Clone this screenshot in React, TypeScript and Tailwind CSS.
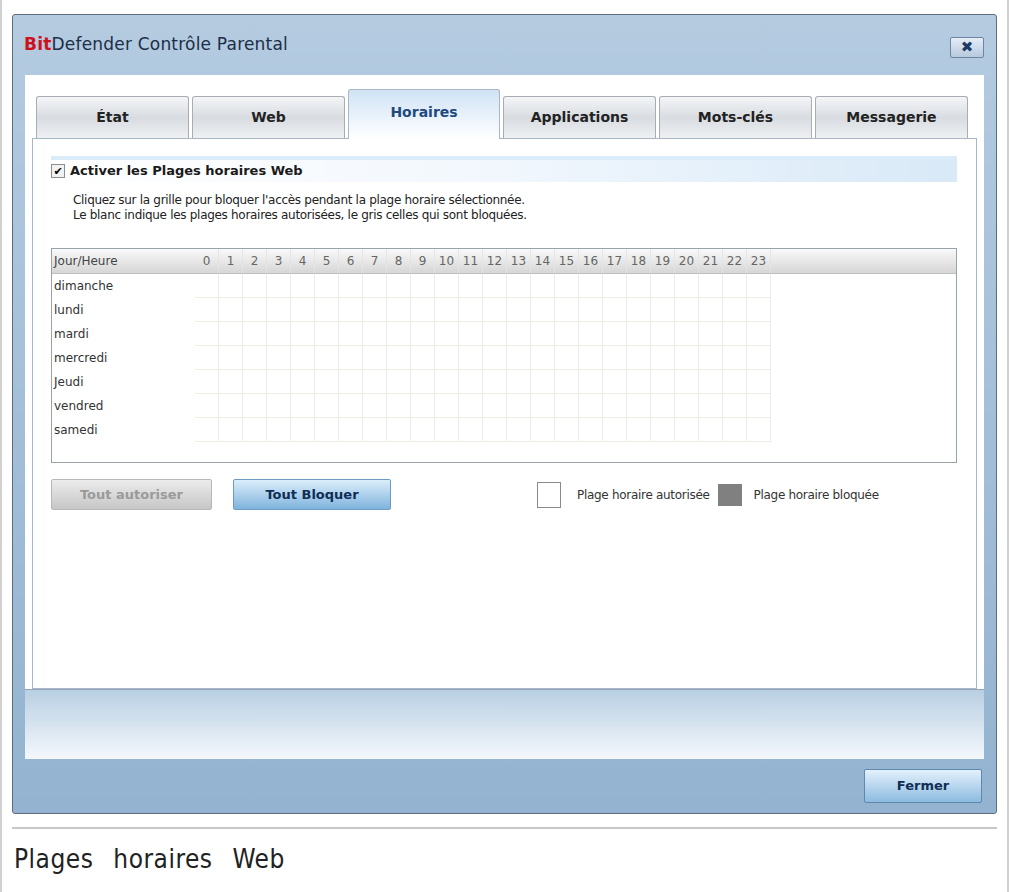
import React from "react";

const tabs = ["État", "Web", "Horaires", "Applications", "Mots-clés", "Messagerie"];
const days = ["dimanche", "lundi", "mardi", "mercredi", "Jeudi", "vendred", "samedi"];
const hours = Array.from({ length: 24 }, (_, i) => i);

export default function App() {
  return (
    <div className="w-[1009px] h-[892px] bg-white border-l-2 border-r-2 border-[#d0d0d0] pt-[14px] px-[10px]" style={{ fontFamily: "Tahoma, 'DejaVu Sans', sans-serif" }}>
      <div className="h-[800px] flex flex-col border border-[#5d6b7a] rounded-[3px] bg-gradient-to-b from-[#b4cbe0] to-[#93b3d0]">
        <div className="h-[60px] flex items-center justify-between pl-[11px] pr-[12px]">
          <div className="text-[17px] text-[#1c2e48] tracking-[0.2px]" style={{ fontFamily: "'DejaVu Sans', sans-serif" }}>
            <span className="text-[#d0101a] font-bold">Bit</span>Defender Contrôle Parental
          </div>
          <div className="w-[34px] h-[21px] border border-[#6d86a3] rounded-[2px] bg-gradient-to-b from-[#e6eef7] to-[#b6c9de] flex items-center justify-center text-[#203a66] font-bold text-[15px] mt-[4px]">✖</div>
        </div>
        <div className="mx-[12px] bg-white flex flex-col h-[614px] pt-[13px] px-[7px]">
          <div className="flex items-end gap-[3px] pl-[4px] pr-[9px] h-[50px]">
            {tabs.map((t) => {
              const active = t === "Horaires";
              return (
                <div
                  key={t}
                  className={
                    active
                      ? "w-[152px] h-[50px] border border-b-0 border-[#a9b6c5] rounded-t-[3px] bg-gradient-to-b from-[#cfe3f4] to-white text-[#1e4a80] text-[14px] font-bold flex items-start justify-center pt-[12px] relative top-[1px]"
                      : "w-[153px] h-[42px] border border-b-0 border-[#a7adb5] rounded-t-[3px] bg-gradient-to-b from-[#f4f5f7] via-[#d8dce1] to-[#eef0f2] text-[#222] text-[14px] font-bold flex items-center justify-center"
                  }
                >
                  {t}
                </div>
              );
            })}
          </div>
          <div className="flex-1 border border-[#a9b6c5] bg-white pl-[18px] pr-[19px] pt-[17px]">
            <div className="h-[26px] flex items-center gap-[5px] bg-gradient-to-r from-white via-[#f1f7fd] to-[#d8e9f7] border-t-4 border-t-[#dcebf8]">
              <div className="w-[14px] h-[14px] border border-[#8a8f96] bg-[#f2f2f2] flex items-center justify-center text-[11px] text-black leading-none">✔</div>
              <span className="text-[13px] font-bold text-[#1a1a1a]">Activer les Plages horaires Web</span>
            </div>
            <div className="mt-[11px] pl-[22px] text-[12px] leading-[15px] text-[#222] tracking-[-0.3px]">
              <div>Cliquez sur la grille pour bloquer l'accès pendant la plage horaire sélectionnée.</div>
              <div>Le blanc indique les plages horaires autorisées, le gris celles qui sont bloquées.</div>
            </div>
            <div className="mt-[25px] h-[215px] border border-[#9aa2aa] bg-white">
              <div className="flex h-[25px] bg-gradient-to-b from-[#fafafa] to-[#d6d6d6] border-b border-[#c0c0c0] text-[12px] text-[#444]">
                <div className="w-[143px] pl-[2px] flex items-center">Jour/Heure</div>
                {hours.map((h) => (
                  <div key={h} className="w-[24px] flex items-center justify-center border-r border-[#e4e4e4] text-[#666]">{h}</div>
                ))}
              </div>
              {days.map((d) => (
                <div key={d} className="flex h-[24px] text-[12px] text-[#333]">
                  <div className="w-[143px] pl-[2px] flex items-center">{d}</div>
                  {hours.map((h) => (
                    <div key={h} className="w-[24px] border-r border-b border-[#eceee4]" />
                  ))}
                </div>
              ))}
            </div>
            <div className="mt-[16px] flex items-center">
              <div className="w-[161px] h-[31px] border border-[#b8b8b8] rounded-[2px] bg-gradient-to-b from-[#ececec] to-[#c6c6c6] flex items-center justify-center text-[13px] font-bold text-[#9a9a9a]">Tout autoriser</div>
              <div className="ml-[21px] w-[158px] h-[31px] border border-[#6e9cc4] rounded-[2px] bg-gradient-to-b from-[#dceefb] to-[#7fb3dc] flex items-center justify-center text-[13px] font-bold text-[#0f2d55]">Tout Bloquer</div>
              <div className="ml-[146px] w-[24px] h-[26px] border border-[#8a8a8a] bg-white" />
              <span className="ml-[16px] text-[12px] text-[#333] tracking-[-0.3px]">Plage horaire autorisée</span>
              <div className="ml-[8px] w-[24px] h-[22px] bg-[#808080]" />
              <span className="ml-[12px] text-[12px] text-[#333] tracking-[-0.3px]">Plage horaire bloquée</span>
            </div>
          </div>
        </div>
        <div className="mx-[12px] h-[70px] bg-gradient-to-b from-[#b9cfe3] to-[#f4f8fc] border-t border-[#8fa5bb]" />
        <div className="flex-1 flex items-center justify-end pr-[14px]">
          <div className="w-[118px] h-[34px] border border-[#5f88b0] rounded-[2px] bg-gradient-to-b from-[#e3f1fb] to-[#8dbbe0] flex items-center justify-center text-[13px] font-bold text-[#0f2d55]">Fermer</div>
        </div>
      </div>
      <div className="mt-[13px] border-t-2 border-[#c8c8c8]" />
      <div className="mt-[11px] pl-[2px] text-[26px] text-[#222] tracking-[0.5px] [word-spacing:12px]" style={{ fontFamily: "'DejaVu Sans Condensed', 'DejaVu Sans', sans-serif" }}>Plages horaires Web</div>
    </div>
  );
}
